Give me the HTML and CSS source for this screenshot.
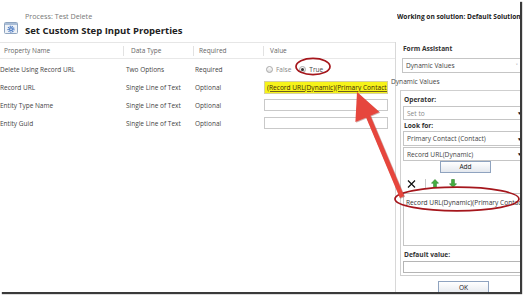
FILE: index.html
```html
<!DOCTYPE html>
<html>
<head>
<meta charset="utf-8">
<link rel="stylesheet" href="styles.css">
</head>
<body>
<div class="frame">
  <header class="top">
    <div class="brand">
      <svg class="icon" viewBox="0 0 14 12" width="14" height="12">
        <rect x="0.5" y="0.5" width="13" height="11" rx="1" fill="#eef2f7" stroke="#8ea4bf"/>
        <rect x="1" y="1" width="12" height="2" fill="#a9bdd6"/>
        <circle cx="7" cy="7.2" r="2.9" fill="none" stroke="#4a78c0" stroke-width="1.4" stroke-dasharray="1.1 0.9"/>
        <circle cx="7" cy="7.2" r="2.1" fill="#5b86c9"/>
        <circle cx="7" cy="7.2" r="0.8" fill="#eef2f7"/>
      </svg>
      <div class="titles">
        <div class="crumb">Process: Test Delete</div>
        <div class="title">Set Custom Step Input Properties</div>
      </div>
    </div>
    <div class="solution">Working on solution: Default Solution</div>
  </header>

  <main class="main">
    <section class="grid">
      <div class="hrow">
        <div class="hc c1">Property Name</div>
        <div class="hc c2 sep">Data Type</div>
        <div class="hc c3 sep">Required</div>
        <div class="hc c4 sep">Value</div>
      </div>
      <div class="row first">
        <div class="c1">Delete Using Record URL</div>
        <div class="c2">Two Options</div>
        <div class="c3">Required</div>
        <div class="c4 radios">
          <span class="radio"></span><span class="rlabel off">False</span>
          <span class="radio on"></span><span class="rlabel">True</span>
        </div>
      </div>
      <div class="row">
        <div class="c1">Record URL</div>
        <div class="c2">Single Line of Text</div>
        <div class="c3">Optional</div>
        <div class="c4"><div class="field dyn"><span class="dyntext">(Record URL(Dynamic)(Primary Contact (Contact))</span></div></div>
      </div>
      <div class="row">
        <div class="c1">Entity Type Name</div>
        <div class="c2">Single Line of Text</div>
        <div class="c3">Optional</div>
        <div class="c4"><div class="field"></div></div>
      </div>
      <div class="row">
        <div class="c1">Entity Guid</div>
        <div class="c2">Single Line of Text</div>
        <div class="c3">Optional</div>
        <div class="c4"><div class="field"></div></div>
      </div>
    </section>

    <aside class="panel">
      <div class="pa-title">Form Assistant</div>
      <div class="select s1"><span>Dynamic Values</span><span class="caret thin">&#709;</span></div>
      <div class="dv">Dynamic Values</div>
      <div class="group">
        <div class="lbl op">Operator:</div>
        <div class="select s2 muted"><span>Set to</span><span class="caret">&#9660;</span></div>
        <div class="lbl look">Look for:</div>
        <div class="select s3"><span>Primary Contact (Contact)</span><span class="caret">&#9660;</span></div>
        <div class="select s4"><span>Record URL(Dynamic)</span><span class="caret">&#9660;</span></div>
        <div class="btn add">Add</div>
        <div class="tools">
          <svg class="tx" viewBox="0 0 9 8" width="9" height="8"><path d="M1 0.5 L8 7.5 M8 0.5 L1 7.5" stroke="#111" stroke-width="1.2"/></svg>
          <span class="tsep"></span>
          <svg class="tup" viewBox="0 0 8 9" width="8" height="9"><path d="M4 0.5 L7.5 4.2 H5.4 V8.5 H2.6 V4.2 H0.5 Z" fill="#46b040" stroke="#2c7d28" stroke-width="0.6"/></svg>
          <svg class="tdown" viewBox="0 0 8 9" width="8" height="9"><path d="M4 8.5 L7.5 4.8 H5.4 V0.5 H2.6 V4.8 H0.5 Z" fill="#46b040" stroke="#2c7d28" stroke-width="0.6"/></svg>
        </div>
        <div class="listbox">
          <div class="item">Record URL(Dynamic)(Primary Contact (Contact))</div>
          <span class="scroll">&#9662;</span>
        </div>
        <div class="lbl def">Default value:</div>
        <div class="input"></div>
      </div>
      <div class="btn ok">OK</div>
    </aside>
  </main>

  <svg class="annot" viewBox="0 0 520 292" width="520" height="292">
    <ellipse cx="313" cy="66.5" rx="17" ry="8.2" fill="none" stroke="#a5161c" stroke-width="1.7"/>
    <ellipse cx="457" cy="199" rx="62" ry="11.8" fill="none" stroke="#a5161c" stroke-width="1.7"/>
    <g transform="translate(0.8,0.8)" opacity="0.35">
      <line x1="402" y1="197" x2="368" y2="116" stroke="#7a1a14" stroke-width="5"/>
      <polygon points="357,92 379.4,111.9 355.4,121.9" fill="#7a1a14"/>
    </g>
    <line x1="402" y1="197" x2="368" y2="116" stroke="#e6463d" stroke-width="4.6" stroke-linecap="butt"/>
    <polygon points="357,92 379.4,111.9 355.4,121.9" fill="#e6463d"/>
  </svg>
</div>
</body>
</html>
```

FILE: styles.css
```css
* {
  box-sizing: border-box;
  margin: 0;
  padding: 0;
}

html, body {
  width: 525px;
  height: 297px;
  background: #fff;
  overflow: hidden;
}

body {
  font-family: "Open Sans", "Noto Sans", sans-serif;
  color: #444;
}

.frame {
  position: relative;
  width: 520px;
  height: 292px;
  overflow: hidden;
  background: #fff;
  box-shadow: 2px 2px 1px #3a3a3a;
}

/* header */
.top {
  display: flex;
  justify-content: space-between;
  height: 42px;
}

.brand {
  display: flex;
  align-items: flex-start;
  padding: 12px 0 0 4px;
}

.icon {
  margin-top: 10px;
  flex: none;
}

.titles {
  margin-left: 7px;
}

.crumb {
  font-size: 7.2px;
  line-height: 9px;
  color: #777;
}

.title {
  font-size: 9.5px;
  line-height: 12px;
  font-weight: 700;
  color: #222;
  margin-top: 4px;
  white-space: nowrap;
}

.solution {
  width: 123px;
  padding-top: 12px;
  font-size: 6.6px;
  line-height: 9px;
  font-weight: 700;
  color: #222;
  white-space: nowrap;
  overflow: hidden;
}

/* main */
.main {
  display: flex;
  height: 250px;
}

.grid {
  width: 395px;
  flex: none;
  border-top: 1px solid #e6e6e6;
}

.hrow,
.row {
  display: grid;
  grid-template-columns: 123px 70px 70px 132px;
  align-items: center;
}

.hrow {
  height: 16px;
  border-bottom: 1px solid #e8e8e8;
}

.hc {
  font-size: 6.5px;
  color: #666;
  white-space: nowrap;
}

.sep {
  border-left: 1px solid #e2e2e2;
  height: 10px;
  display: flex;
  align-items: center;
}

.hc.c1 { padding-left: 4px; }
.hc.c2 { padding-left: 7px; }
.hc.c3 { padding-left: 5px; }
.hc.c4 { padding-left: 6px; }

.row {
  height: 18px;
  font-size: 6.5px;
  color: #444;
  white-space: nowrap;
}

.row.first {
  margin-top: 1px;
}

.row .c2 { padding-left: 3px; }
.row .c3 { padding-left: 2px; }

.radios {
  display: flex;
  align-items: center;
  padding-left: 3px;
}

.radio {
  width: 7px;
  height: 7px;
  border: 1px solid #a8a8a8;
  border-radius: 50%;
  background: linear-gradient(#ffffff, #dcdcdc);
  display: flex;
  align-items: center;
  justify-content: center;
}

.radio.on::after {
  content: "";
  width: 3px;
  height: 3px;
  border-radius: 50%;
  background: #333;
}

.rlabel {
  margin-left: 3px;
  margin-right: 8px;
}

.rlabel.off {
  color: #888;
}

.field {
  width: 124px;
  height: 12px;
  margin-left: 1px;
  border: 1px solid #c9c9c9;
  background: #fff;
  overflow: hidden;
  white-space: nowrap;
}

.field.dyn {
  height: 13px;
  background: #f6f31a;
  border-color: #d6d0a0;
  color: #3b2a05;
  font-size: 6.6px;
  line-height: 11px;
  padding-left: 2px;
}

.dyntext {
  display: block;
  overflow: hidden;
  text-decoration: underline;
  text-decoration-color: #6b5a20;
}

/* panel */
.panel {
  flex: 1;
  border-left: 1px solid #d8d8d8;
  padding-left: 6px;
  font-size: 6.6px;
}

.pa-title {
  margin-top: 2px;
  line-height: 10px;
  font-weight: 700;
  color: #333;
  padding-left: 1px;
}

.select {
  display: flex;
  justify-content: space-between;
  align-items: center;
  width: 123px;
  height: 14px;
  border: 1px solid #c5c5c5;
  background: #fff;
  padding: 0 0 0 3px;
  color: #444;
  white-space: nowrap;
}

.select.muted {
  color: #888;
}

.caret {
  font-size: 5px;
  color: #111;
  width: 8px;
}

.caret.thin {
  font-size: 6px;
  color: #666;
}

.s1 {
  margin-top: 4px;
  height: 15px;
}

.dv {
  margin-top: 4px;
  margin-left: -11px;
  line-height: 10px;
  color: #444;
}

.group {
  margin-top: 3px;
  margin-left: -2px;
  height: 186px;
  border: 1px solid #cfcfcf;
  border-right: none;
  padding-left: 1px;
}

.group .select {
  margin-left: 1px;
}

.lbl {
  line-height: 10px;
  font-weight: 700;
  color: #333;
  padding-left: 2px;
}

.op { margin-top: 4px; }
.s2 { margin-top: 1px; }
.look { margin-top: 1px; }
.s3 { height: 15px; }
.s4 { margin-top: 1px; }

.btn {
  width: 51px;
  height: 12px;
  border: 1px solid #8fa3bf;
  background: linear-gradient(#ffffff, #e4e8ee);
  color: #222;
  line-height: 10px;
  text-align: center;
}

.add {
  margin-left: 38px;
}

.tools {
  display: flex;
  align-items: center;
  height: 11px;
  margin-top: 5px;
  padding-left: 5px;
}

.tsep {
  width: 1px;
  height: 9px;
  background: #c8c8c8;
  margin-left: 9px;
}

.tup {
  margin-left: 5px;
}

.tdown {
  margin-left: 10px;
}

.listbox {
  position: relative;
  margin-top: 4px;
  margin-left: 1px;
  height: 53px;
  border: 1px solid #c5c5c5;
}

.item {
  padding: 4px 0 0 2px;
  line-height: 9px;
  white-space: nowrap;
  color: #333;
}

.scroll {
  position: absolute;
  right: 0;
  bottom: 1px;
  font-size: 6px;
  color: #999;
}

.def {
  margin-top: 4px;
}

.input {
  margin-top: 1px;
  margin-left: 1px;
  height: 12px;
  border: 1px solid #b5b5b5;
}

.ok {
  margin-top: 5px;
  margin-left: 36px;
  height: 14px;
  line-height: 12px;
}

/* annotations */
.annot {
  position: absolute;
  left: 0;
  top: 0;
  pointer-events: none;
}
```
